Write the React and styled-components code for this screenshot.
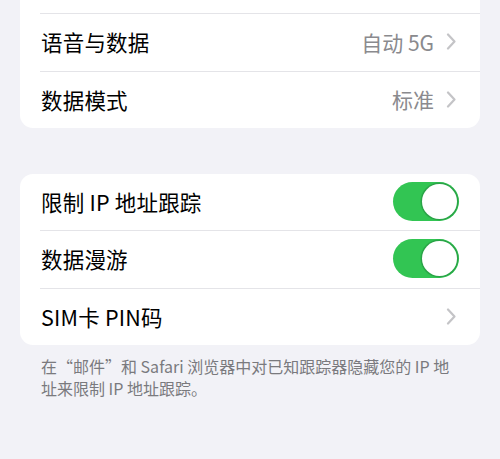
import React from "react";
import styled, { createGlobalStyle } from "styled-components";

const Global = createGlobalStyle`
  html, body { margin: 0; padding: 0; background: #f2f2f7; }
  body {
    width: 500px; height: 459px; overflow: hidden;
    font-family: "Noto Sans CJK SC", "Noto Sans", sans-serif;
    -webkit-font-smoothing: antialiased;
  }
`;

const Page = styled.div`
  display: flex;
  flex-direction: column;
  padding: 0 20px;
  background: #f2f2f7;
  min-height: 459px;
  box-sizing: border-box;
`;

const Card = styled.div`
  background: #fff;
  border-radius: ${(p) => (p.$clipTop ? "0 0 13px 13px" : "13px")};
  padding-top: ${(p) => (p.$clipTop ? "13px" : "0")};
  margin-top: ${(p) => p.$mt || 0}px;
  overflow: hidden;
`;

const Row = styled.div`
  display: flex;
  align-items: center;
  height: ${(p) => p.$h || 57}px;
  margin-left: 20px;
  padding-left: 1px;
  padding-bottom: 2px;
  padding-right: ${(p) => (p.$toggle ? 21 : 23)}px;
  border-top: ${(p) => (p.$first ? "none" : "1px solid #e4e4e8")};
  box-sizing: border-box;
`;

const Label = styled.div`
  flex: 1;
  font-size: 21.5px;
  color: #000;
  letter-spacing: 0.2px;
`;

const Value = styled.div`
  font-size: 21px;
  color: #8a8a8e;
  margin-right: 12px;
`;

const Switch = styled.div`
  width: 66px;
  height: 39px;
  border-radius: 20px;
  background: #32c553;
  display: flex;
  align-items: center;
  justify-content: flex-end;
  padding: 2px;
  box-sizing: border-box;
`;

const Knob = styled.div`
  width: 35px;
  height: 35px;
  border-radius: 50%;
  background: #fff;
  box-shadow: 0 0 0 1.5px #2aa447;
`;

const Footer = styled.div`
  padding: 10px 20px 0 21px;
  font-size: 16px;
  line-height: 22px;
  color: #7a7a7e;
`;

const Chevron = () => (
  <svg width="11" height="17" viewBox="0 0 11 17" fill="none">
    <path d="M2 1.5 L8.5 8.5 L2 15.5" stroke="#c4c4c7" strokeWidth="2.2" strokeLinecap="round" strokeLinejoin="round" />
  </svg>
);

const Toggle = () => (
  <Switch>
    <Knob />
  </Switch>
);

export default function App() {
  return (
    <>
      <Global />
      <Page>
        <Card $clipTop>
          <Row $h={58}>
            <Label>语音与数据</Label>
            <Value>自动 5G</Value>
            <Chevron />
          </Row>
          <Row>
            <Label>数据模式</Label>
            <Value>标准</Value>
            <Chevron />
          </Row>
        </Card>
        <Card $mt={46}>
          <Row $first $toggle $h={56}>
            <Label>限制 IP 地址跟踪</Label>
            <Toggle />
          </Row>
          <Row $toggle $h={58}>
            <Label>数据漫游</Label>
            <Toggle />
          </Row>
          <Row>
            <Label>SIM卡 PIN码</Label>
            <Chevron />
          </Row>
        </Card>
        <Footer>在“邮件”和 Safari 浏览器中对已知跟踪器隐藏您的 IP 地址来限制 IP 地址跟踪。</Footer>
      </Page>
    </>
  );
}
